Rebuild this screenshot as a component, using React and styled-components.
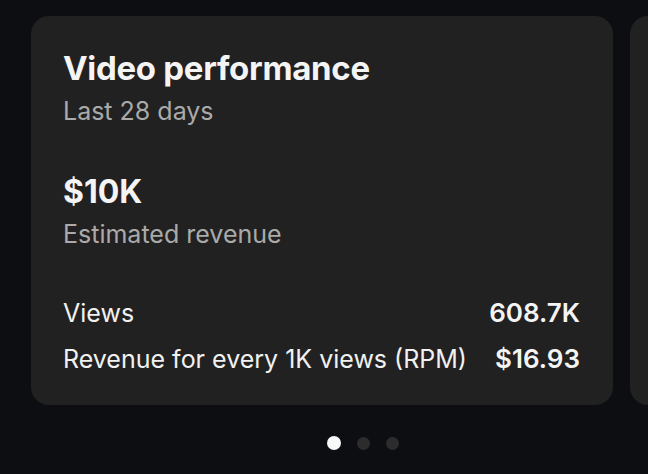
import styled, { createGlobalStyle } from "styled-components";

const GlobalStyle = createGlobalStyle`
  html, body {
    margin: 0;
    padding: 0;
    background: #0d0e11;
  }
  body {
    font-family: Inter, Roboto, "Noto Sans", Arial, sans-serif;
    color: #f1f1f1;
    -webkit-font-smoothing: antialiased;
  }
`;

const stats = [
  { label: "Views", value: "608.7K" },
  { label: "Revenue for every 1K views (RPM)", value: "$16.93" },
];

export default function App() {
  return (
    <>
      <GlobalStyle />
      <Styled.Page>
        <Styled.Carousel>
          <Styled.Card>
            <Styled.Title>Video performance</Styled.Title>
            <Styled.Sub>Last 28 days</Styled.Sub>

            <Styled.Amount>$10K</Styled.Amount>
            <Styled.Sub $tight>Estimated revenue</Styled.Sub>

            <Styled.Stats>
              {stats.map((s) => (
                <Styled.Row key={s.label}>
                  <Styled.Label>{s.label}</Styled.Label>
                  <Styled.Value>{s.value}</Styled.Value>
                </Styled.Row>
              ))}
            </Styled.Stats>
          </Styled.Card>
          <Styled.Card />
        </Styled.Carousel>

        <Styled.Dots>
          <Styled.Dot $active />
          <Styled.Dot />
          <Styled.Dot />
        </Styled.Dots>
      </Styled.Page>
    </>
  );
}

const Styled = {
  Page: styled.div`
    width: 648px;
    height: 474px;
    overflow: hidden;
    padding-top: 16px;
    box-sizing: border-box;
  `,

  Carousel: styled.div`
    display: flex;
    gap: 17px;
    padding-left: 31px;
  `,

  Card: styled.div`
    flex: 0 0 582px;
    height: 389px;
    box-sizing: border-box;
    padding: 31px 33px 0 32px;
    background: #212121;
    border-radius: 18px;
    display: flex;
    flex-direction: column;
  `,

  Title: styled.h2`
    margin: 0;
    font-size: 33px;
    line-height: 42px;
    font-weight: 700;
    letter-spacing: -0.3px;
    color: #f4f4f4;
  `,

  Sub: styled.div`
    margin-top: 6px;
    font-size: 25px;
    line-height: 32px;
    color: #aaaaaa;
  `,

  Amount: styled.div`
    margin-top: 45px;
    font-size: 32px;
    line-height: 40px;
    font-weight: 700;
    color: #f4f4f4;
  `,

  Stats: styled.div`
    margin-top: 47px;
    display: flex;
    flex-direction: column;
    gap: 14px;
  `,

  Row: styled.div`
    display: flex;
    justify-content: space-between;
    align-items: baseline;
    font-size: 25px;
    line-height: 32px;
  `,

  Label: styled.span`
    color: #f1f1f1;
  `,

  Value: styled.span`
    font-size: 26px;
    font-weight: 600;
    color: #f4f4f4;
  `,

  Dots: styled.div`
    display: flex;
    justify-content: center;
    align-items: center;
    gap: 16px;
    padding-left: 78px;
    margin-top: 31px;
  `,

  Dot: styled.span`
    width: ${(p) => (p.$active ? "14px" : "13px")};
    height: ${(p) => (p.$active ? "14px" : "13px")};
    border-radius: 50%;
    background: ${(p) => (p.$active ? "#f8f8f8" : "#2c2c2c")};
  `,
};
